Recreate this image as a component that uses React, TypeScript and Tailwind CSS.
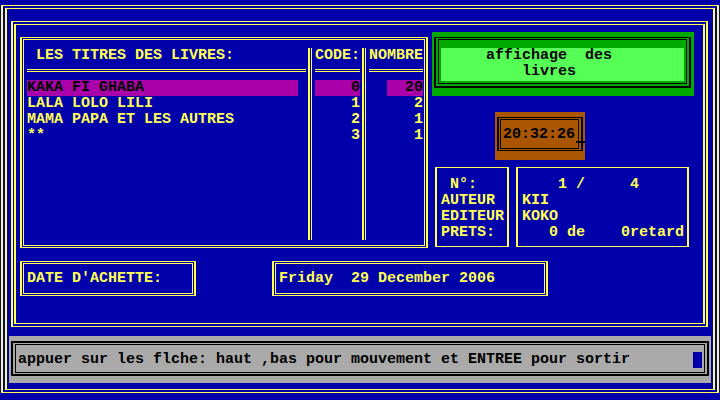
import React from "react";

function DFrame({
  className = "",
  innerClassName = "",
  children,
}: {
  className?: string;
  innerClassName?: string;
  children?: React.ReactNode;
}) {
  return (
    <div className={`border-x-2 border-y border-[#ffff55] p-px ${className}`}>
      <div className={`border border-[#ffff55] h-full w-full ${innerClassName}`}>{children}</div>
    </div>
  );
}

const titles = ["KAKA FI GHABA", "LALA LOLO LILI", "MAMA PAPA ET LES AUTRES", "**"];
const codes = ["0", "1", "2", "3"];
const nombres = ["20", "2", "1", "1"];

function Sep() {
  return <div className="h-[192px] w-[4px] border-l-2 border-r border-[#ffff55]" />;
}

function Underline() {
  return <div className="mt-[5px] h-[3px] border-y border-[#ffff55]" />;
}

export default function App() {
  return (
    <div className="w-[720px] h-[400px] bg-[#0000aa] overflow-hidden pt-[5px] pl-px text-[#ffff55] font-['Liberation_Mono',monospace] font-bold text-[15px] leading-[16px] whitespace-pre">
      {/* outer double frame */}
      <div className="w-[718px] h-[388px] border-x-2 border-y border-[#ffff55] px-[2px] py-[2px]">
        <div className="h-full w-full border-x-2 border-y border-[#ffff55] flex flex-col">
          {/* second frame */}
          <div className="mt-[12px] ml-[4px] w-[697px] h-[306px] border-x-2 border-y border-[#ffff55] px-px py-[2px]">
            <div className="h-full w-full border-x-2 border-y border-[#ffff55] flex flex-col">
              <div className="flex items-start">
                {/* list box */}
                <DFrame className="mt-[12px] ml-[4px] w-[408px] h-[211px]" innerClassName="pt-[8px] flex items-start">
                  <div className="w-[284px] h-[192px] flex flex-col pl-[3px] pr-[2px]">
                    <div className="h-[16px]"> LES TITRES DES LIVRES:</div>
                    <Underline />
                    <div className="mt-[8px] flex flex-col">
                      {titles.map((t, i) => (
                        <div
                          key={i}
                          className={i === 0 ? "h-[16px] w-[271px] bg-[#aa00aa] text-black" : "h-[16px]"}
                        >
                          {t}
                        </div>
                      ))}
                    </div>
                  </div>
                  <Sep />
                  <div className="w-[50px] h-[192px] flex flex-col pl-[3px] pr-[2px]">
                    <div className="h-[16px]">CODE:</div>
                    <Underline />
                    <div className="mt-[8px] flex flex-col">
                      {codes.map((c, i) => (
                        <div
                          key={i}
                          className={i === 0 ? "h-[16px] text-right bg-[#aa00aa] text-black" : "h-[16px] text-right"}
                        >
                          {c}
                        </div>
                      ))}
                    </div>
                  </div>
                  <Sep />
                  <div className="w-[58px] h-[192px] flex flex-col pl-[3px] pr-[1px]">
                    <div className="h-[16px]">NOMBRE</div>
                    <Underline />
                    <div className="mt-[8px] flex flex-col items-end">
                      {nombres.map((n, i) => (
                        <div
                          key={i}
                          className={
                            i === 0
                              ? "h-[16px] w-[36px] text-right bg-[#aa00aa] text-black"
                              : "h-[16px] w-[36px] text-right"
                          }
                        >
                          {n}
                        </div>
                      ))}
                    </div>
                  </div>
                </DFrame>

                {/* right column */}
                <div className="ml-[4px] mt-[7px] w-[262px] flex flex-col items-start">
                  <div className="w-[262px] h-[64px] bg-[#00aa00] pt-[5px] pl-[2px]">
                    <div className="w-[257px] h-[51px] border-x-2 border-t border-b-2 border-black px-[2px] pt-px pb-[2px]">
                      <div className="h-full w-full border border-black pt-[8px] px-[2px]">
                        <div className="h-[33px] bg-[#55ff55] text-black pl-[45px] flex flex-col">
                          <div className="h-[16px]">affichage  des</div>
                          <div className="h-[16px]">    livres</div>
                        </div>
                      </div>
                    </div>
                  </div>

                  <div className="relative mt-[16px] ml-[63px] w-[90px] h-[48px] bg-[#aa5500] pt-[5px] pl-[2px]">
                    <div className="w-[86px] h-[34px] border-x-2 border-y border-black pl-px pr-[2px] py-px">
                      <div className="h-full w-full border border-black pl-[2px] pt-[7px] text-black">
                        20:32:26
                      </div>
                    </div>
                    <div className="absolute left-[81px] top-[29px] w-[9px] h-[2px] bg-black" />
                  </div>

                  <div className="mt-[7px] ml-[3px] flex gap-[7px]">
                    <div className="w-[74px] h-[80px] border-x-2 border-y border-[#ffff55] pl-[4px] pt-[9px] flex flex-col">
                      <div className="h-[16px]"> N°:</div>
                      <div className="h-[16px]">AUTEUR</div>
                      <div className="h-[16px]">EDITEUR</div>
                      <div className="h-[16px]">PRETS:</div>
                    </div>
                    <div className="w-[173px] h-[80px] border-x-2 border-y border-[#ffff55] pl-[4px] pt-[9px] flex flex-col">
                      <div className="h-[16px]">    1 /     4</div>
                      <div className="h-[16px]">KII</div>
                      <div className="h-[16px]">KOKO</div>
                      <div className="h-[16px]">   0 de    0retard</div>
                    </div>
                  </div>
                </div>
              </div>

              {/* date row */}
              <div className="mt-[13px] ml-[4px] flex items-start gap-[76px]">
                <DFrame className="w-[176px] h-[35px]" innerClassName="pl-[3px] pt-[7px]">
                  DATE D'ACHETTE:
                </DFrame>
                <DFrame className="w-[276px] h-[35px]" innerClassName="pl-[3px] pt-[7px]">
                  Friday  29 December 2006
                </DFrame>
              </div>
            </div>
          </div>

          {/* status bar */}
          <div className="mt-[9px] ml-[2px] w-[702px] h-[47px] bg-[#aaaaaa] pt-[5px] pl-[2px]">
            <div className="w-[698px] h-[35px] border-2 border-black px-[2px] py-px">
              <div className="h-full w-full border border-black pl-[2px] pr-[2px] pt-[7px] flex items-start text-black">
                <div className="h-[16px]">appuer sur les flche: haut ,bas pour mouvement et ENTREE pour sortir</div>
                <div className="ml-auto w-[9px] h-[16px] bg-[#0000aa]" />
              </div>
            </div>
          </div>
        </div>
      </div>
    </div>
  );
}
